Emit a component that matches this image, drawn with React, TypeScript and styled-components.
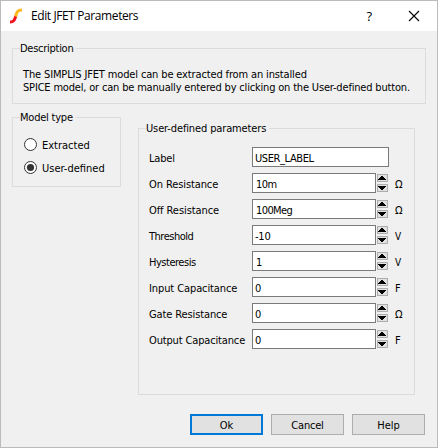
import React from "react";
import styled, { createGlobalStyle } from "styled-components";

const GlobalStyle = createGlobalStyle`
  * { box-sizing: border-box; }
  body { margin: 0; background: #f0f0f0; }
`;

const Dialog = styled.main`
  width: 438px;
  height: 448px;
  display: flex;
  flex-direction: column;
  border: 1px solid #bbbbbb;
  background: #f0f0f0;
  color: #000;
  font: 11px/14px "DejaVu Sans Condensed", "Noto Sans", sans-serif;
  overflow: hidden;
`;

const TitleBar = styled.header`
  height: 30px;
  flex: none;
  display: flex;
  align-items: center;
  background: #fff;
  padding: 0 17px 0 8px;
`;

const Title = styled.h1`
  margin: 0 auto 0 8px;
  font: 12px/16px "Open Sans", "Noto Sans", sans-serif;
  white-space: nowrap;
`;

const TitleButton = styled.button<{ $gap?: number }>`
  display: flex;
  border: 0;
  padding: 0;
  margin: 0 ${(p) => p.$gap ?? 0}px 0 0;
  background: none;
  color: #000;
  font: 500 13px/14px "Open Sans", "Noto Sans", sans-serif;
`;

const Content = styled.div`
  flex: 1;
  display: flex;
  flex-direction: column;
  padding: 17px 11px 12px;
`;

const Group = styled.fieldset<{ $w: number; $h: number; $pad: string }>`
  width: ${(p) => p.$w}px;
  height: ${(p) => p.$h}px;
  min-width: 0;
  flex: none;
  margin: 0;
  border: 1px solid #dcdcdc;
  padding: ${(p) => p.$pad};
`;

const Legend = styled.legend<{ $offset?: number }>`
  height: 1px;
  margin-left: ${(p) => p.$offset ?? -3}px;
  padding: 0 3px 0 0;
  line-height: 16px;
  display: flex;
  align-items: flex-start;

  > span {
    margin-top: -7px;
  }
`;

const Text = styled.span<{ $ls?: number }>`
  letter-spacing: ${(p) => p.$ls ?? 0}px;
  white-space: pre;
`;

const Description = styled.p`
  margin: 0;
  display: flex;
  flex-direction: column;
  line-height: 13px;
`;

const Columns = styled.div`
  display: flex;
  gap: 17px;
  margin-top: 13px;
`;

const ParameterColumn = styled.div`
  margin-top: 11px;
`;

const Option = styled.label`
  display: flex;
  align-items: center;
  gap: 5px;
  height: 23px;

  > span {
    padding-top: 2px;
  }
`;

const Row = styled.div`
  display: flex;
  align-items: center;
  height: 20px;
  margin-bottom: 6px;
`;

const RowLabel = styled.label`
  width: 103px;
  flex: none;
  padding-top: 4px;
`;

const Field = styled.div<{ $w: number; $indent: number }>`
  width: ${(p) => p.$w}px;
  height: 20px;
  flex: none;
  border: 1px solid #7a7a7a;
  background: #fff;
  padding: 4px 0 0 ${(p) => p.$indent}px;
`;

const Spinner = styled.div`
  display: flex;
  flex-direction: column;
  gap: 2px;
  margin: 0 7px 0 1px;
`;

const SpinButton = styled.button`
  display: flex;
  justify-content: flex-start;
  width: 11px;
  height: 8px;
  padding: 1px 0;
  border: 1px solid #adadad;
  background: #e1e1e1;
`;

const Unit = styled.span<{ $size: number }>`
  padding-top: 4px;
  font-size: ${(p) => p.$size}px;
`;

const Actions = styled.footer`
  display: flex;
  gap: 8px;
  justify-content: flex-end;
  margin: auto 1px 0 0;
`;

const ActionButton = styled.button<{ $primary?: boolean }>`
  width: 73px;
  height: 21px;
  padding: 2px 0 0;
  border: ${(p) => (p.$primary ? "2px solid #0078d7" : "1px solid #adadad")};
  background: #e1e1e1;
  color: #000;
  font: inherit;
`;

const Logo = () => (
  <svg width="14" height="16" viewBox="0 0 14 16" fill="none" strokeWidth="3">
    <path d="M1 14C5 14 5.5 12 6.8 8" stroke="#f4101c" />
    <path d="M6.6 8.5C7.8 4 8.5 2 13 2" stroke="#ffb81c" />
  </svg>
);

const CloseIcon = () => (
  <svg width="12" height="12" viewBox="0 0 12 12" stroke="#000" strokeWidth="1.1">
    <path d="M1 1L11 11M11 1L1 11" />
  </svg>
);

const Arrow = ({ down }: { down?: boolean }) => (
  <svg width="8" height="4" viewBox="0 0 8 4" shapeRendering="crispEdges">
    <path d={down ? "M0 0H8V1H7V2H6V3H5V4H3V3H2V2H1V1H0Z" : "M0 4H8V3H7V2H6V1H5V0H3V1H2V2H1V3H0Z"} />
  </svg>
);

const Radio = ({ checked }: { checked?: boolean }) => (
  <svg width="13" height="13" viewBox="0 0 13 13">
    <circle cx="6.5" cy="6.5" r="6" fill="#fff" stroke="#333" />
    {checked && <circle cx="6.5" cy="6.5" r="3.6" fill="#333" />}
  </svg>
);

const parameters = [
  { label: "On Resistance", ls: -0.1, value: "10m", vls: -0.5, indent: 3, unit: "Ω" },
  { label: "Off Resistance", ls: -0.08, value: "100Meg", vls: -0.6, indent: 3, unit: "Ω" },
  { label: "Threshold", ls: -0.5, value: "-10", vls: -0.2, indent: 2, unit: "V" },
  { label: "Hysteresis", ls: -0.48, value: "1", vls: 0, indent: 3, unit: "V" },
  { label: "Input Capacitance", ls: -0.1, value: "0", vls: 0, indent: 2, unit: "F" },
  { label: "Gate Resistance", ls: -0.12, value: "0", vls: 0, indent: 2, unit: "Ω" },
  { label: "Output Capacitance", ls: -0.15, value: "0", vls: 0, indent: 2, unit: "F" },
];

export default function App() {
  return (
    <>
      <GlobalStyle />
      <Dialog>
        <TitleBar>
          <Logo />
          <Title><Text $ls={-0.4}>Edit JFET Parameters</Text></Title>
          <TitleButton $gap={36}>?</TitleButton>
          <TitleButton aria-label="Close"><CloseIcon /></TitleButton>
        </TitleBar>
        <Content>
          <Group $w={414} $h={56} $pad="19px 0 0 10px">
            <Legend><Text $ls={-0.27}>Description</Text></Legend>
            <Description>
              <Text $ls={-0.14}>The SIMPLIS JFET model can be extracted from an installed</Text>
              <Text $ls={-0.18}>SPICE model, or can be manually entered by clicking on the User-defined button.</Text>
            </Description>
          </Group>
          <Columns>
            <Group $w={109} $h={70} $pad="15px 0 0 11px">
              <Legend $offset={-4}><Text $ls={-0.22}>Model type</Text></Legend>
              <Option><Radio /><Text>Extracted</Text></Option>
              <Option><Radio checked /><Text>User-defined</Text></Option>
            </Group>
            <ParameterColumn>
              <Group $w={277} $h={267} $pad="18px 0 0 10px">
                <Legend><Text $ls={-0.13}>User-defined parameters</Text></Legend>
                <Row>
                  <RowLabel><Text $ls={-0.2}>Label</Text></RowLabel>
                  <Field $w={137} $indent={2}><Text $ls={-0.4}>USER_LABEL</Text></Field>
                </Row>
                {parameters.map((p) => (
                  <Row key={p.label}>
                    <RowLabel><Text $ls={p.ls}>{p.label}</Text></RowLabel>
                    <Field $w={124} $indent={p.indent}><Text $ls={p.vls}>{p.value}</Text></Field>
                    <Spinner>
                      <SpinButton aria-label="Increase"><Arrow /></SpinButton>
                      <SpinButton aria-label="Decrease"><Arrow down /></SpinButton>
                    </Spinner>
                    <Unit $size={p.unit === "V" ? 10 : 11}>{p.unit}</Unit>
                  </Row>
                ))}
              </Group>
            </ParameterColumn>
          </Columns>
          <Actions>
            <ActionButton $primary><Text>Ok</Text></ActionButton>
            <ActionButton><Text $ls={-0.2}>Cancel</Text></ActionButton>
            <ActionButton><Text>Help</Text></ActionButton>
          </Actions>
        </Content>
      </Dialog>
    </>
  );
}
